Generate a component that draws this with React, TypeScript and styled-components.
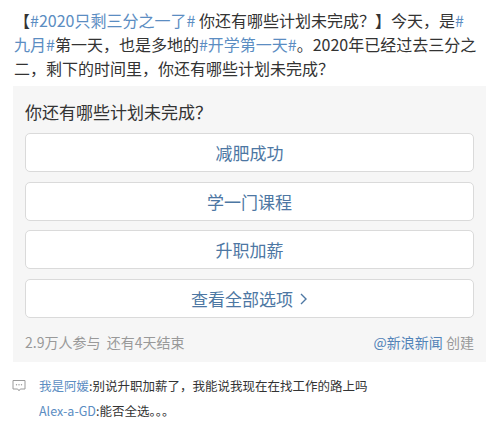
import React from "react";
import styled, { createGlobalStyle } from "styled-components";

const GlobalStyle = createGlobalStyle`
    html, body {
        margin: 0;
        padding: 0;
        background: #ffffff;
    }
    body {
        font-family: "Noto Sans CJK SC", "Noto Sans", sans-serif;
        color: #333333;
    }
`;

const Page = styled.div`
    width: 499px;
    padding-top: 8px;
`;

const PostText = styled.p`
    margin: 0;
    padding: 0 10px 0 14px;
    font-size: 16px;
    line-height: 24px;
    white-space: nowrap;
    color: #333333;
`;

const Tag = styled.span`
    color: #5b8dc2;
`;

const PollCard = styled.div`
    margin: 6px 13px 0;
    padding: 14px 12px 10px;
    background: #f6f6f6;
`;

const Question = styled.div`
    font-size: 17px;
    line-height: 24px;
    color: #333333;
    margin-bottom: 9px;
`;

const Options = styled.div`
    display: flex;
    flex-direction: column;
    gap: 9.7px;
`;

const OptionButton = styled.div`
    height: 39px;
    box-sizing: border-box;
    display: flex;
    align-items: center;
    justify-content: center;
    gap: 6px;
    background: #ffffff;
    border: 1px solid #dadada;
    border-radius: 5px;
    font-size: 17px;
    color: #4d77a3;
`;

const PollFooter = styled.div`
    display: flex;
    justify-content: space-between;
    align-items: center;
    margin-top: 14px;
    font-size: 14px;
    line-height: 20px;
    color: #999999;
`;

const Creator = styled.span`
    color: #5283b8;
`;

const Comments = styled.div`
    display: grid;
    grid-template-columns: 27px 1fr;
    row-gap: 3px;
    padding: 13px 0 0 12px;
    font-size: 12.5px;
    line-height: 22px;
    color: #333333;
`;

const IconCell = styled.div`
    display: flex;
    align-items: center;
    height: 22px;
`;

const Name = styled.span`
    color: #5b8dc2;
`;

function CommentIcon() {
    return (
        <svg width="14" height="14" viewBox="0 0 14 14" fill="none">
            <path
                d="M1 1.5h12v8.5H8.3L7 11.8 5.7 10H1z"
                stroke="#9a9a9a"
                strokeWidth="1"
                strokeLinejoin="round"
            />
            <circle cx="4.5" cy="5.8" r="0.7" fill="#9a9a9a" />
            <circle cx="7" cy="5.8" r="0.7" fill="#9a9a9a" />
            <circle cx="9.5" cy="5.8" r="0.7" fill="#9a9a9a" />
        </svg>
    );
}

function Chevron() {
    return (
        <svg width="9" height="14" viewBox="0 0 9 14" fill="none">
            <path d="M2 2l5 5-5 5" stroke="#4d77a3" strokeWidth="1.4" />
        </svg>
    );
}

const options = ["减肥成功", "学一门课程", "升职加薪"];

export default function App() {
    return (
        <Page>
            <GlobalStyle />
            <PostText>
                【<Tag>#2020只剩三分之一了#</Tag> 你还有哪些计划未完成？】今天，是<Tag>#</Tag>
                <br />
                <Tag>九月#</Tag>第一天，也是多地的<Tag>#开学第一天#</Tag>。2020年已经过去三分之
                <br />
                二，剩下的时间里，你还有哪些计划未完成？
            </PostText>

            <PollCard>
                <Question>你还有哪些计划未完成？</Question>
                <Options>
                    {options.map((o) => (
                        <OptionButton key={o}>{o}</OptionButton>
                    ))}
                    <OptionButton>
                        查看全部选项
                        <Chevron />
                    </OptionButton>
                </Options>
                <PollFooter>
                    <span>2.9万人参与&nbsp;&nbsp;还有4天结束</span>
                    <span>
                        <Creator>@新浪新闻</Creator> 创建
                    </span>
                </PollFooter>
            </PollCard>

            <Comments>
                <IconCell>
                    <CommentIcon />
                </IconCell>
                <div>
                    <Name>我是阿媛</Name>:别说升职加薪了，我能说我现在在找工作的路上吗
                </div>
                <div />
                <div>
                    <Name>Alex-a-GD</Name>:能否全选。。。
                </div>
            </Comments>
        </Page>
    );
}
